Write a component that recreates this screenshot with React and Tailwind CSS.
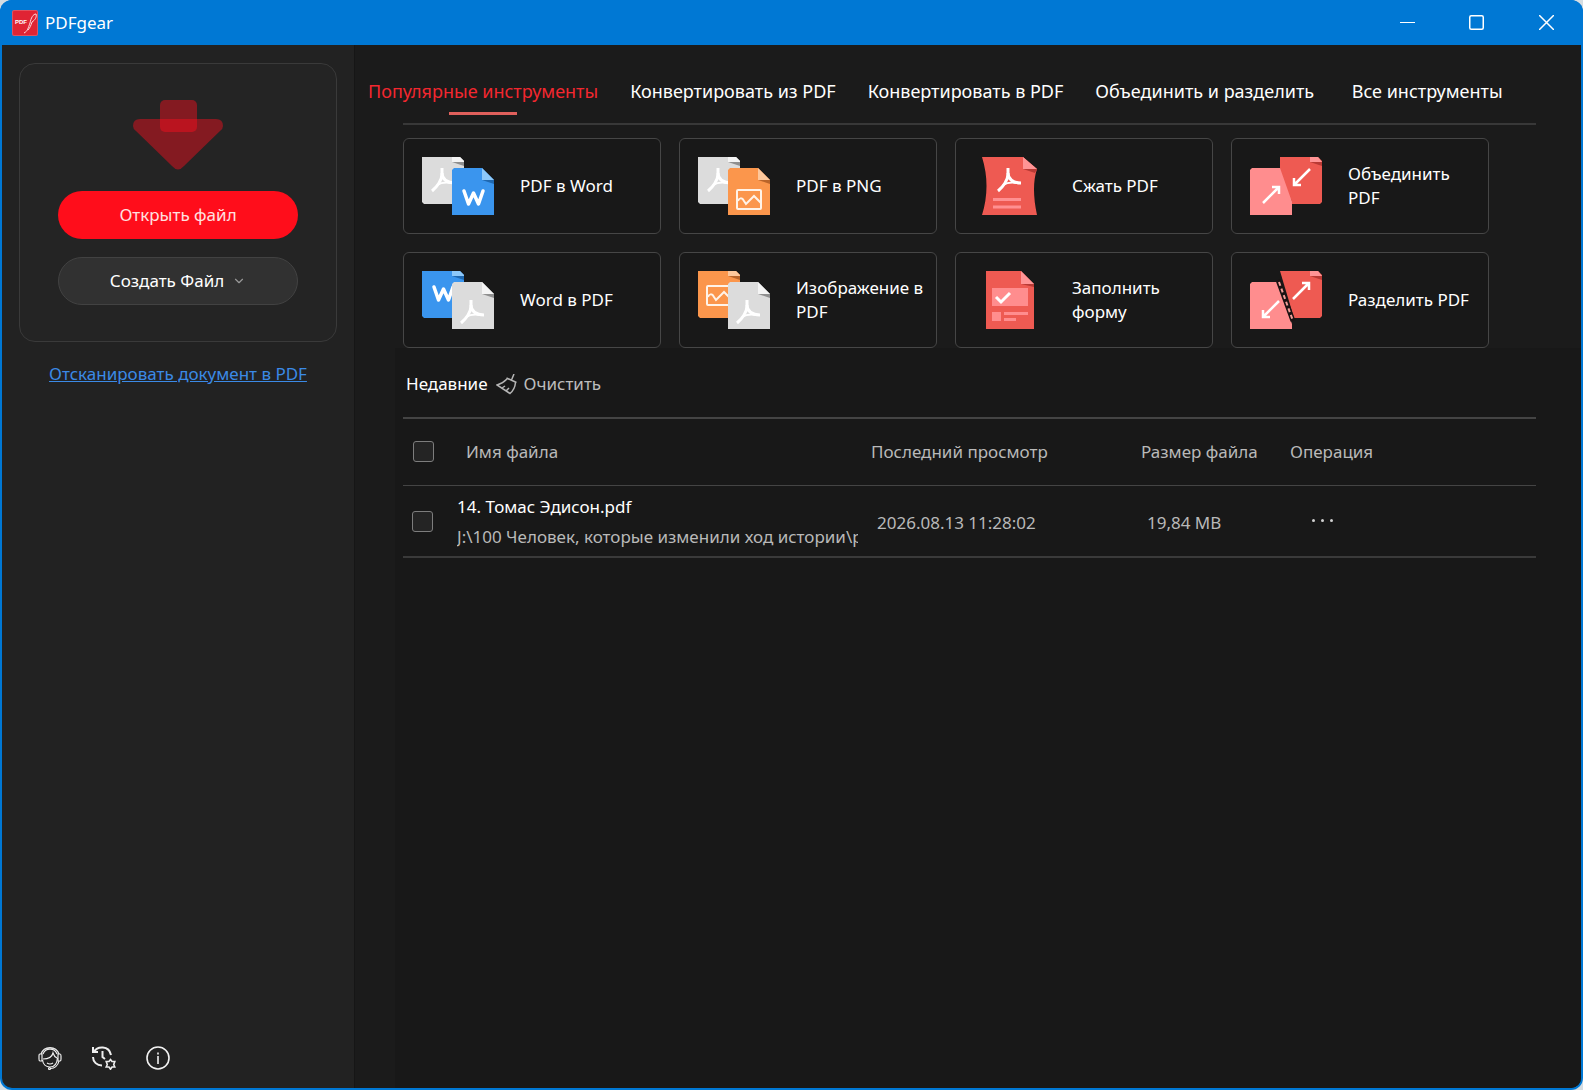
import React, { useState } from 'react';
import { ChevronDown } from 'lucide-react';

const tabs = [
  'Популярные инструменты',
  'Конвертировать из PDF',
  'Конвертировать в PDF',
  'Объединить и разделить',
  'Все инструменты',
];

const files = [
  {
    name: '14. Томас Эдисон.pdf',
    path: 'J:\\100 Человек, которые изменили ход истории\\pdf',
    viewed: '2026.08.13 11:28:02',
    size: '19,84 MB',
  },
];

// fill, folded corner, fold shadow
const DOC_COLORS = {
  gray: ['#dcdcdc', '#f4f4f4', '#8f8f8f'],
  blue: ['#3a95ee', '#8cc8fa', '#1f68b0'],
  orange: ['#fb964c', '#fdc79b', '#b9642a'],
};

function BackDoc({ color }) {
  const [fill, fold, shade] = DOC_COLORS[color];
  return (
    <g>
      <path d="M0 0H38L42 4V47H2L0 45Z" fill={fill} />
      <path d="M30 0H38L42 4V5H30Z" fill={fold} />
      <path d="M30 5H42V9Z" fill={shade} />
    </g>
  );
}

function FrontDoc({ color }) {
  const [fill, fold, shade] = DOC_COLORS[color];
  return (
    <g>
      <path d="M32 11H60L72 23V58H30V13Z" fill={fill} />
      <path d="M60 11L72 23H60Z" fill={fold} />
      <path d="M60 23H72V27Z" fill={shade} />
    </g>
  );
}

function Acrobat({ x = 0, y = 0 }) {
  return (
    <g transform={`translate(${x} ${y})`} fill="none" stroke="#fff" strokeWidth="3">
      <path d="M11 0V6C11 12 6 19 1 23" />
      <path d="M11 5C11 11 16 15 24 15" />
      <path d="M6 17C11 14 15 14 20 15" strokeWidth="2" />
    </g>
  );
}

function WordMark({ x, y }) {
  return (
    <path
      transform={`translate(${x} ${y})`}
      d="M1 1L5.500 14L10.500 3L15.500 14L20 1"
      fill="none"
      stroke="#fff"
      strokeWidth="3.500"
      strokeLinejoin="round"
      strokeLinecap="round"
    />
  );
}

function PictureMark({ x, y }) {
  return (
    <g transform={`translate(${x} ${y})`} fill="none" stroke="#fff3e8" strokeWidth="2">
      <rect x="1" y="1" width="24" height="19" rx="1" />
      <path d="M2 12C3 9 6 8 8 12L10 15L18 7L25 14" />
    </g>
  );
}

function Icon({ children }) {
  return (
    <svg width="72" height="58" viewBox="0 0 72 58" className="shrink-0" aria-hidden="true">
      {children}
    </svg>
  );
}

function CompressIcon() {
  return (
    <Icon>
      <path d="M8 0H49L63 12Q57 30 63 58H8Q17 29 8 0Z" fill="#ee5a52" />
      <path d="M49 0L63 12H49Z" fill="#ff9495" />
      <path d="M49 12H63L61 16Z" fill="#b93a35" />
      <Acrobat x={23} y={11} />
      <path d="M19 42.500H47M19 50H47" stroke="#ff9091" strokeWidth="3" />
    </Icon>
  );
}

function FormIcon() {
  return (
    <Icon>
      <path d="M12 0H47L60 13V58H12Z" fill="#ee5a52" />
      <path d="M47 0L60 13H47Z" fill="#ff9495" />
      <path d="M47 13H60V16Z" fill="#b93a35" />
      <path d="M18 17H54V35H18ZM18 41H27V50H18ZM30 41H54V44H30ZM30 47H42V50H30Z" fill="#ff8d8e" />
      <path d="M22 26L27 31L36 22" fill="none" stroke="#fff" strokeWidth="3" />
    </Icon>
  );
}

function MergeIcon() {
  return (
    <Icon>
      <path d="M2 11H33L42 44V58H0V13Z" fill="#ff8d8e" />
      <path d="M30 0H68L72 4V45L70 47H42V45L30 11Z" fill="#ee5a52" />
      <path d="M60 0H68L72 5H60Z" fill="#ff9495" />
      <path d="M60 5H72V9Z" fill="#b93a35" />
      <path d="M13 46L29 30M22 30H29V37M60 12L44 28M44 21V28H51" fill="none" stroke="#fff" strokeWidth="2.500" />
    </Icon>
  );
}

function SplitIcon() {
  return (
    <Icon>
      <path d="M2 11H27L42 53V58H0V13Z" fill="#ff8d8e" />
      <path d="M30 0H68L72 4V45L70 47H44Z" fill="#ee5a52" />
      <path d="M60 0H68L72 5H60Z" fill="#ff9495" />
      <path d="M60 5H72V9Z" fill="#b93a35" />
      <path d="M28 9L43 50" stroke="#1b1212" strokeWidth="5" />
      <path d="M29 11L43 50" stroke="#f3a09a" strokeWidth="2" strokeDasharray="4 3" />
      <path d="M29 30L13 46M13 39V46H20M43 28L59 12M52 12H59V19" fill="none" stroke="#fff" strokeWidth="2.500" />
    </Icon>
  );
}

const tools = [
  {
    label: 'PDF в Word',
    icon: <Icon><BackDoc color="gray" /><Acrobat x={9} y={11} /><FrontDoc color="blue" /><WordMark x={41} y={33} /></Icon>,
  },
  {
    label: 'PDF в PNG',
    icon: <Icon><BackDoc color="gray" /><Acrobat x={9} y={11} /><FrontDoc color="orange" /><PictureMark x={38} y={32} /></Icon>,
  },
  { label: 'Сжать PDF', icon: <CompressIcon /> },
  { label: 'Объединить PDF', icon: <MergeIcon /> },
  {
    label: 'Word в PDF',
    icon: <Icon><BackDoc color="blue" /><WordMark x={11} y={15} /><FrontDoc color="gray" /><Acrobat x={38} y={29} /></Icon>,
  },
  {
    label: 'Изображение в PDF',
    icon: <Icon><BackDoc color="orange" /><PictureMark x={8} y={14} /><FrontDoc color="gray" /><Acrobat x={38} y={29} /></Icon>,
  },
  { label: 'Заполнить форму', icon: <FormIcon /> },
  { label: 'Разделить PDF', icon: <SplitIcon /> },
];

function Logo() {
  return (
    <svg width="26" height="26" viewBox="0 0 26 26" aria-hidden="true">
      <rect width="26" height="26" rx="2" fill="#e0525f" />
      <rect x="1" y="1" width="24" height="24" rx="1" fill="#e02434" />
      <text x="3" y="14" fill="#fff" fontSize="6" fontWeight="700" fontFamily="Liberation Sans">PDF</text>
      <path d="M12 23C16 21 16 18 18 13C19 8 21 4 24 4C25 7 23 10 20 12C19 15 18 18 16 20" fill="none" stroke="#ffd9dc" />
    </svg>
  );
}

function TitleBar() {
  return (
    <header className="flex h-[45px] items-center bg-[#0078d4] pl-3 text-white">
      <Logo />
      <h1 className="flex-1 pl-[7px] text-[17px]">PDFgear</h1>
      <button aria-label="Свернуть" className="flex h-full w-[70px] items-center justify-center">
        <svg width="15" height="15" viewBox="0 0 15 15"><path d="M0 7.500H15" stroke="#fff" /></svg>
      </button>
      <button aria-label="Развернуть" className="flex h-full w-[68px] items-center justify-center">
        <svg width="15" height="15" viewBox="0 0 15 15" fill="none">
          <rect x=".75" y=".75" width="13.500" height="13.500" rx="1.500" stroke="#fff" strokeWidth="1.500" />
        </svg>
      </button>
      <button aria-label="Закрыть" className="flex h-full w-[73px] items-center justify-center">
        <svg width="15" height="15" viewBox="0 0 15 15"><path d="M0 0L15 15M15 0L0 15" stroke="#fff" strokeWidth="1.500" /></svg>
      </button>
    </header>
  );
}

function SupportIcon() {
  return (
    <svg width="24" height="24" viewBox="0 0 24 24" fill="none" stroke="#eee" strokeWidth="1.200">
      <path d="M3 8A9.500 9.500 0 0 1 21 8M5 8A7.500 7.500 0 0 1 19 8" />
      <path d="M4 8H2Q1 8 1 10V13Q1 15 2 15H4ZM20 8H22Q23 8 23 10V13Q23 15 22 15H20Z" />
      <path d="M4.500 14C5 18 8 21 12 21C16 21 19 18 19.500 12" />
      <path d="M5 13C10 13 14 11 15 7C16 10 17 11 19 12M9 17Q12 19 15 17" />
      <path d="M21 15C20 20 16 22.500 13 22.500" />
      <circle cx="11.500" cy="22.500" r="1" />
    </svg>
  );
}

function HistoryIcon() {
  return (
    <svg width="24" height="24" viewBox="0 0 24 24" fill="none" stroke="#eee" strokeWidth="2">
      <path d="M1 1V6H6M2 6C5 0 17 -1 19 9M1 11C1 16 5 19.500 10 19.500M10.500 5V11L13 13" />
      <path
        d="M18.500 13.500L20 15.500L22.800 15.500L21.700 18.500L22.800 21H20L18.500 23.200L17 21H14.200L15.300 18.500L14.200 15.500H17Z"
        strokeWidth="1.600"
      />
    </svg>
  );
}

function InfoIcon() {
  return (
    <svg width="24" height="24" viewBox="0 0 24 24" fill="none" stroke="#f2f2f2" strokeWidth="1.600">
      <circle cx="12" cy="12" r="11" />
      <path d="M12 10V18M12 6.500V8.500" />
    </svg>
  );
}

function Sidebar() {
  return (
    <aside className="flex w-[353px] shrink-0 flex-col border-r border-[#161616] bg-[#222222] px-[17px] pt-[18px] pb-[18px]">
      <section className="flex flex-col items-center rounded-2xl border border-[#3a3a3a] bg-[#242424] pt-9 pb-9">
        <svg width="90" height="70" viewBox="0 0 90 70" aria-hidden="true">
          <path d="M7 19H83Q90 19 90 26Q90 29 87 31L51 66Q45 73 39 66L3 31Q0 29 0 26Q0 19 7 19Z" fill="#ff0d1d" fillOpacity=".44" />
          <rect x="27" width="37" height="32" rx="5" fill="#ff0d1d" fillOpacity=".44" />
        </svg>
        <button className="mt-[21px] h-12 w-60 rounded-full bg-[#ff0d1b] text-[17px] text-[#ffe0e0]">
          Открыть файл
        </button>
        <button className="mt-[18px] flex h-12 w-60 items-center justify-center gap-2 rounded-full border border-[#424242] bg-[#313131] text-[17px] text-white">
          Создать Файл
          <ChevronDown size={14} className="text-[#999999]" />
        </button>
      </section>
      <a href="#scan" className="mt-5 self-center text-[17px] leading-6 whitespace-nowrap text-[#3b8ae6] underline">
        Отсканировать документ в PDF
      </a>
      <div className="mt-auto flex gap-[30px] pl-[19px]">
        <button aria-label="Поддержка"><SupportIcon /></button>
        <button aria-label="Настройки"><HistoryIcon /></button>
        <button aria-label="О программе"><InfoIcon /></button>
      </div>
    </aside>
  );
}

function Checkbox({ label }) {
  return (
    <input
      type="checkbox"
      aria-label={label}
      className="block size-[21px] appearance-none rounded-[3px] border border-[#7d7d7d] bg-[#242424] checked:bg-[#ff0d1b]"
    />
  );
}

function RecentFiles() {
  return (
    <section className="ml-10 flex-1 bg-[#181818] pt-[23px] pr-[45px] pl-2">
      <div className="flex h-[26px] items-center pl-[3px] text-[17px]">
        <h2 className="text-white">Недавние</h2>
        <button className="ml-2 flex items-center gap-[7px] text-[#bdbdbd]">
          <svg width="21" height="21" viewBox="0 0 21 21" fill="none" stroke="#b5b5b5" strokeWidth="1.500">
            <path d="M18 0L15.500 6M10.500 4L20.500 8.500M11 5C8 8 5 10 1 11L14 19.500C17 17 19 14 19.500 8.500M6 14L9 12M10 17L13 14" />
          </svg>
          Очистить
        </button>
      </div>
      <table className="mt-5 w-full table-fixed border-collapse text-left text-[17px] text-[#b9b9b9]">
        <colgroup>
          <col className="w-[54px]" />
          <col className="w-[414px]" />
          <col className="w-[270px]" />
          <col className="w-[149px]" />
          <col />
        </colgroup>
        <thead>
          <tr className="h-[67px] border-t-2 border-b border-t-[#444444] border-b-[#444444]">
            <th className="pl-[10px] font-normal"><Checkbox label="Выбрать все" /></th>
            <th className="pl-[9px] font-normal">Имя файла</th>
            <th className="font-normal">Последний просмотр</th>
            <th className="font-normal">Размер файла</th>
            <th className="font-normal">Операция</th>
          </tr>
        </thead>
        <tbody>
          {files.map((file) => (
            <tr key={file.name} className="h-[72px] border-b-2 border-[#3a3a3a]">
              <td className="pt-[2px] pl-[9px]"><Checkbox label={file.name} /></td>
              <td className="pt-[3px] pr-[13px] leading-[30px]">
                <div className="text-white">{file.name}</div>
                <div className="overflow-hidden whitespace-nowrap">{file.path}</div>
              </td>
              <td className="pt-[3px] pl-[6px]">{file.viewed}</td>
              <td className="pt-[3px] pl-[6px]">{file.size}</td>
              <td className="pl-[22px]">
                <button aria-label="Действия" className="flex gap-[6px] py-2">
                  <span className="size-[3px] rounded-full bg-[#d0d0d0]" />
                  <span className="size-[3px] rounded-full bg-[#d0d0d0]" />
                  <span className="size-[3px] rounded-full bg-[#d0d0d0]" />
                </button>
              </td>
            </tr>
          ))}
        </tbody>
      </table>
    </section>
  );
}

export default function App() {
  const [active, setActive] = useState(0);

  return (
    <div className="min-h-screen bg-[#d5dde2] font-['Noto_Sans',sans-serif]">
      <div className="flex min-h-screen flex-col overflow-hidden rounded-xl bg-[#0078d4]">
        <TitleBar />
        <div className="mx-[2px] mb-[2px] flex flex-1 overflow-hidden rounded-b-[10px]">
          <Sidebar />
          <main className="flex min-w-0 flex-1 flex-col bg-[#1b1b1b]">
            <nav className="flex h-[70px] items-end whitespace-nowrap">
              {tabs.map((tab, i) => (
                <button
                  key={tab}
                  onClick={() => setActive(i)}
                  className={`flex flex-col items-center text-[18px] last:min-w-[194px] ${i === 0 ? 'pr-4 pl-[13px]' : 'px-4'} ${
                    i === active ? 'text-[#f3272f]' : 'text-white'
                  }`}
                >
                  <span className="leading-[26px]">{tab}</span>
                  <span className={`mt-2 h-[3px] w-[68px] ${i === active ? 'bg-[#e0605c]' : 'bg-transparent'}`} />
                </button>
              ))}
            </nav>
            <div className="mt-2 mr-[45px] ml-12 border-t-2 border-[#383838] pt-[13px]">
              <div className="grid grid-cols-[repeat(4,258px)] gap-[18px]">
                {tools.map((tool) => (
                  <button
                    key={tool.label}
                    className="flex h-24 items-center gap-[26px] rounded-md border border-[#464646] bg-[#181818] pr-2 pl-[18px] text-left text-[17px] leading-6 text-white"
                  >
                    {tool.icon}
                    <span>{tool.label}</span>
                  </button>
                ))}
              </div>
            </div>
            <RecentFiles />
          </main>
        </div>
      </div>
    </div>
  );
}
